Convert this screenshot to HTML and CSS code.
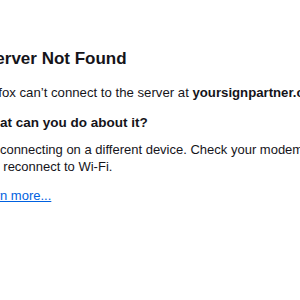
FILE: index.html
```html
<!DOCTYPE html>
<html lang="en">
<head>
<meta charset="utf-8">
<title>Server Not Found</title>
<link rel="stylesheet" href="styles.css">
</head>
<body>
<main class="error">
  <h1 class="title">Server Not Found</h1>
  <p class="intro">Firefox can’t connect to the server at <strong>yoursignpartner.com</strong>.</p>
  <h2 class="subtitle">What can you do about it?</h2>
  <p class="advice">Try connecting on a different device. Check your modem or router. Disconnect and reconnect to Wi-Fi.</p>
  <a class="learn" href="#">Learn more...</a>
</main>
</body>
</html>
```
FILE: styles.css
```css
html, body {
  margin: 0;
  padding: 0;
  background: #ffffff;
  overflow: hidden;
}
body {
  font-family: "Liberation Sans", Arial, sans-serif;
  color: #15141a;
}
.error {
  margin-left: -21px;
  width: 452px;
  padding-top: 49px;
  display: flex;
  flex-direction: column;
  align-items: flex-start;
}
.title {
  margin: 0 0 0 5px;
  font-size: 17px;
  line-height: 20px;
  font-weight: 700;
}
.intro {
  margin: 15.5px 0 0 -3.5px;
  font-size: 13.2px;
  line-height: 16px;
}
.subtitle {
  margin: 14px 0 0;
  font-size: 13.5px;
  line-height: 16px;
  font-weight: 700;
}
.advice {
  margin: 10.5px 0 0 -1px;
  font-size: 13px;
  line-height: 17px;
}
.learn {
  margin: 12.5px 0 0 -5px;
  font-size: 13px;
  line-height: 16px;
  color: #0061e0;
  text-decoration: underline;
}
```
